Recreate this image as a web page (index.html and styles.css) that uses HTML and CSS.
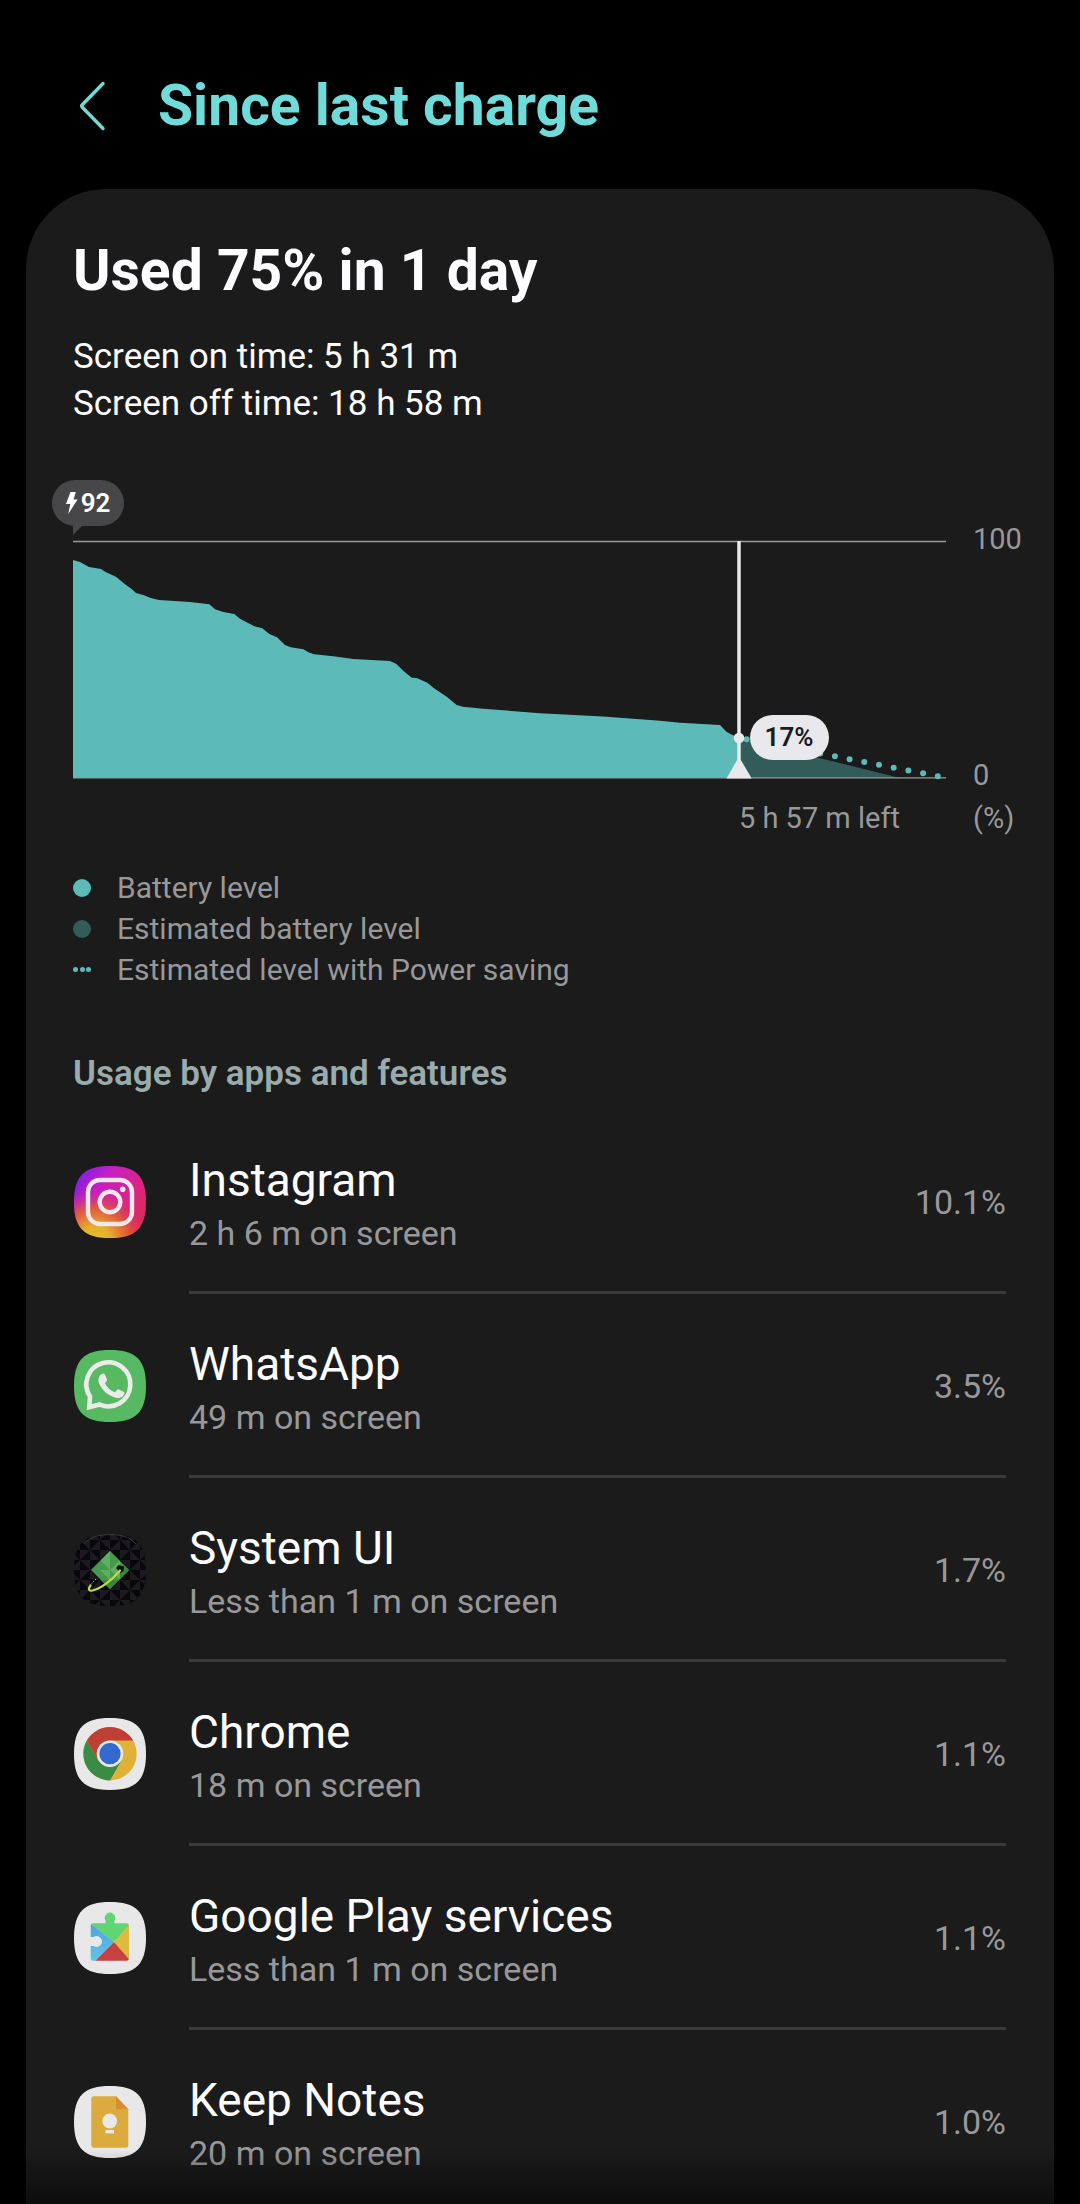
FILE: index.html
```html
<!DOCTYPE html>
<html lang="en">
<head>
<meta charset="utf-8">
<meta name="viewport" content="width=device-width, initial-scale=1">
<title>Since last charge</title>
<link rel="stylesheet" href="styles.css">
</head>
<body>
<header class="topbar">
  <button class="back" type="button" aria-label="Back">
    <svg width="28" height="50" viewBox="0 0 28 50"><path d="M25 2.500L4.500 23.500Q3 25 4.500 26.500L25 47.500" fill="none" stroke="currentColor" stroke-width="3.400" stroke-linecap="round" stroke-linejoin="round"/></svg>
  </button>
  <h1 class="title">Since last charge</h1>
</header>

<main class="card">
  <section class="summary">
    <h2 class="used">Used 75% in 1 day</h2>
    <p class="time">Screen on time: 5 h 31 m</p>
    <p class="time">Screen off time: 18 h 58 m</p>
  </section>

  <section class="chart">
    <div class="plot">
      <svg class="curve" viewBox="0 0 873 238" aria-hidden="true">
        <path d="M666 197L827 237H666Z" fill="#325c59"/>
        <path d="M0 19L7 21 16 26 28 28 32 30.700 43 35.700 52 43.300 58.700 48 63 52 71 54.300 77 56.700 86 59 117 61 136.300 63.300 142 68.300 150.300 71 161.300 73 167 77.700 181.300 85.300 189.300 87.300 196.300 93 204 96.300 212 104 217.700 106.300 230.300 108.300 235.300 111.300 241 113.300 260.300 115.300 280.300 118 317 120 323 122.700 330.300 129.700 338.700 136.700 343.700 137 354.300 141.700 361 147.300 373.700 155.700 383.700 164 389.700 165.700 410.300 167.700 467 172.300 530 175.500 587 179.700 607 181.700 647 184 653.700 191 660 194.300 666 196.700V237H0Z" fill="#5cbbb9"/>
        <path d="M0 .5H873M0 236.800H873" stroke="#98989a" stroke-width="1.300"/>
        <path d="M673.700 198.300L865 235.200" stroke="#5cbbb9" stroke-width="6" stroke-linecap="round" stroke-dasharray="0 14.970"/>
        <path d="M666 0V236" stroke="#e9e8ec" stroke-width="3.500"/>
        <path d="M653.500 237.500L663.500 220Q666 216 668.500 220L678.700 237.500Z" fill="#e9e8ec"/>
        <circle cx="666" cy="197" r="5.300" fill="#e9e8ec"/>
      </svg>
      <div class="start-tag">
        <svg width="12" height="22" viewBox="0 0 12 22" aria-hidden="true"><path d="M4.500 0H9.800L7.600 7.500H11.600L2.200 22 4.300 12H0Z" fill="#fff"/></svg>92
      </div>
      <div class="now-tag">17%</div>
    </div>
    <div class="axis"><span>100</span><span>0</span></div>
    <div class="left-time">5 h 57 m left</div>
    <div class="unit">(%)</div>
  </section>

  <ul class="legend">
    <li><span class="dot"></span>Battery level</li>
    <li><span class="dot dot-dim"></span>Estimated battery level</li>
    <li><span class="dots"><i></i><i></i><i></i></span>Estimated level with Power saving</li>
  </ul>

  <h3 class="section-title">Usage by apps and features</h3>

  <ul class="apps">
    <li class="app">
      <svg class="icon" viewBox="0 0 72 72" aria-hidden="true">
        <defs>
          <linearGradient id="igBase" x1="0" y1="0" x2="1" y2=".75"><stop offset="0" stop-color="#6a1cf5"/><stop offset=".35" stop-color="#c51fc4"/><stop offset=".7" stop-color="#dc2484"/><stop offset="1" stop-color="#d92b50"/></linearGradient>
          <radialGradient id="igWarm" cx=".3" cy="1.050" r=".72"><stop offset="0" stop-color="#e5c52e"/><stop offset=".3" stop-color="#e5b02e"/><stop offset=".65" stop-color="#e2622f" stop-opacity=".85"/><stop offset="1" stop-color="#dc2b70" stop-opacity="0"/></radialGradient>
        </defs>
        <path d="M36 0C62 0 72 10 72 36S62 72 36 72 0 62 0 36 10 0 36 0Z" fill="url(#igBase)"/>
        <path d="M36 0C62 0 72 10 72 36S62 72 36 72 0 62 0 36 10 0 36 0Z" fill="url(#igWarm)"/>
        <rect x="14" y="14" width="44" height="44" rx="12" fill="none" stroke="#f0e8ec" stroke-width="4.400"/>
        <circle cx="36" cy="36" r="10.300" fill="none" stroke="#f0e8ec" stroke-width="4.400"/>
        <circle cx="48.700" cy="23.300" r="2.800" fill="#f0e8ec"/>
      </svg>
      <div class="info"><span class="name">Instagram</span><span class="usage">2 h 6 m on screen</span></div>
      <span class="percent">10.1%</span>
    </li>
    <li class="app">
      <svg class="icon" viewBox="0 0 72 72" aria-hidden="true">
        <path d="M36 0C62 0 72 10 72 36S62 72 36 72 0 62 0 36 10 0 36 0Z" fill="#57b962"/>
        <path d="M16 46.500A22 22 0 1 1 25.500 54.500L15.300 57.200Z" fill="none" stroke="#ebebeb" stroke-width="4.600" stroke-linejoin="miter"/>
        <path d="M27.500 24C29 23.200 30.300 23.300 31 24.800L33 29.500C33.400 30.600 31.500 32.500 31 33.300 33 37.500 36.300 40.500 41 42.300 42.300 41.300 43.500 39 44.700 39.400L50 42C51.200 42.800 49.800 45.500 48.500 46.600 46.500 48.300 43.500 48.400 41 47.500 33.500 45 28.800 40.800 25.500 34.500 23.500 30.500 24.500 26 27.500 24Z" fill="#ebebeb"/>
      </svg>
      <div class="info"><span class="name">WhatsApp</span><span class="usage">49 m on screen</span></div>
      <span class="percent">3.5%</span>
    </li>
    <li class="app">
      <svg class="icon" viewBox="0 0 72 72" aria-hidden="true">
        <defs>
          <pattern id="facets" width="20" height="20" x="6" y="6" patternUnits="userSpaceOnUse"><path d="M0 0H10V10ZM20 0V10H10ZM0 20V10H10ZM10 10L20 20H10Z" fill="#1c1a20"/></pattern>
          <clipPath id="diamond"><path d="M36 17L55 36 36 55 17 36Z"/></clipPath>
        </defs>
        <path d="M36 0C62 0 72 10 72 36S62 72 36 72 0 62 0 36 10 0 36 0Z" fill="#08070b"/>
        <path d="M36 0C62 0 72 10 72 36S62 72 36 72 0 62 0 36 10 0 36 0Z" fill="url(#facets)"/>
        <path d="M10 10C17 2 25 .7 36 .7S55 2 62 10" fill="none" stroke="#3a3a3e" stroke-width="1"/>
        <g clip-path="url(#diamond)">
          <path d="M17 17H55V55H17Z" fill="#45994b"/>
          <path d="M26 17H36V36L26 26ZM36 36L46 26V46ZM26 36H36V46Z" fill="#60ae62"/>
          <path d="M26 46H55V55H26ZM46 36L55 26V46H46Z" fill="#388541"/>
        </g>
        <path d="M42 34L44.500 31 50 32.500 49.500 37 46.500 39Z" fill="#071008"/>
        <path d="M46 36.500C38 46 27 54.500 18.500 56.500 14.500 57.500 13.800 55 16.500 51.500" fill="none" stroke="#c1dd3c" stroke-width="2.200" stroke-linecap="round"/>
        <path d="M17 50.500L22 45" fill="none" stroke="#bccb76" stroke-width="1" stroke-dasharray="1.500 1.500"/>
      </svg>
      <div class="info"><span class="name">System UI</span><span class="usage">Less than 1 m on screen</span></div>
      <span class="percent">1.7%</span>
    </li>
    <li class="app">
      <svg class="icon" viewBox="0 0 72 72" aria-hidden="true">
        <path d="M36 0C62 0 72 10 72 36S62 72 36 72 0 62 0 36 10 0 36 0Z" fill="#e8e8e8"/>
        <circle cx="36" cy="35.700" r="26.700" fill="#e0b137"/>
        <path d="M12.900 22.400A26.700 26.700 0 0 0 36 62.400L47.500 42.400H24.500Z" fill="#3a8c45"/>
        <path d="M12.900 22.400A26.700 26.700 0 0 1 59.100 22.400H36L24.500 42.400Z" fill="#bf3f34"/>
        <circle cx="36" cy="35.700" r="13.300" fill="#e8e8e8"/>
        <circle cx="36" cy="35.700" r="10.600" fill="#3469cf"/>
      </svg>
      <div class="info"><span class="name">Chrome</span><span class="usage">18 m on screen</span></div>
      <span class="percent">1.1%</span>
    </li>
    <li class="app">
      <svg class="icon" viewBox="0 0 72 72" aria-hidden="true">
        <defs>
          <clipPath id="piece"><path d="M19 21.300H31.500V18.500A5.200 5.200 0 1 1 40.500 18.500V21.300H52.500Q55 21.300 55 24V56Q55 58.700 52.500 58.700H19Q16.700 58.700 16.700 56V44H19.500A5.400 5.400 0 1 0 19.500 35H16.700V24Q16.700 21.300 19 21.300Z"/></clipPath>
          <linearGradient id="sky" x1="0" y1="0" x2="0" y2="1"><stop offset="0" stop-color="#4da3dd"/><stop offset="1" stop-color="#62c6e8"/></linearGradient>
        </defs>
        <path d="M36 0C62 0 72 10 72 36S62 72 36 72 0 62 0 36 10 0 36 0Z" fill="#e8e8e8"/>
        <g clip-path="url(#piece)">
          <path d="M16 8H56V23L40 40 16 21Z" fill="#5fd672"/>
          <path d="M56 22V59L40 40Z" fill="#e0ba3c"/>
          <path d="M16 21L40 40 20 60H16Z" fill="url(#sky)"/>
          <path d="M40 40L57 59.500H20.500Z" fill="#c8403f"/>
        </g>
      </svg>
      <div class="info"><span class="name">Google Play services</span><span class="usage">Less than 1 m on screen</span></div>
      <span class="percent">1.1%</span>
    </li>
    <li class="app">
      <svg class="icon" viewBox="0 0 72 72" aria-hidden="true">
        <path d="M36 0C62 0 72 10 72 36S62 72 36 72 0 62 0 36 10 0 36 0Z" fill="#e8e8e8"/>
        <path d="M20 10.300H42L54.300 23.300V59Q54.300 61.700 51.600 61.700H20Q17.300 61.700 17.300 59V13Q17.300 10.300 20 10.300Z" fill="#dbac3d"/>
        <path d="M42 10.300L54.300 23.300H42Z" fill="#dc8c2e"/>
        <circle cx="35.700" cy="35" r="7.400" fill="#e8e8e8"/>
        <path d="M31.500 44H40V47.400H31.500Z" fill="#e8e8e8"/>
      </svg>
      <div class="info"><span class="name">Keep Notes</span><span class="usage">20 m on screen</span></div>
      <span class="percent">1.0%</span>
    </li>
  </ul>
</main>
<div class="fade"></div>
</body>
</html>
```
FILE: styles.css
```css
* { box-sizing: border-box; }

body {
  margin: 0;
  min-height: 100vh;
  display: flex;
  flex-direction: column;
  background: #000;
  color: #fdfcff;
  font-family: Roboto, "Liberation Sans", sans-serif;
}

h1, h2, h3, p, ul { margin: 0; padding: 0; }
ul { list-style: none; }

.topbar {
  display: flex;
  align-items: center;
  gap: 52px;
  padding: 74px 78px 51px;
  color: #70dcd9;
}

.back {
  display: flex;
  padding: 0;
  border: 0;
  background: none;
  color: inherit;
}

.title { font-size: 57px; line-height: 64px; font-weight: 700; }

.card {
  flex: 1;
  margin: 0 26px;
  padding: 46px 0 0;
  border-radius: 80px 80px 0 0;
  background: #1b1b1b;
}

.summary { padding: 0 47px; }
.used { margin-bottom: 26px; font-size: 57px; line-height: 72px; font-weight: 700; }
.time { font-size: 35px; line-height: 47px; }

.chart {
  display: grid;
  grid-template-columns: 1fr 47px;
  column-gap: 27px;
  margin-top: 114px;
  padding: 0 34px 0 47px;
  color: #98989a;
  font-size: 29px;
  line-height: 36px;
}

.plot { position: relative; }
.curve { display: block; width: 100%; overflow: visible; }

.start-tag {
  position: absolute;
  left: -21px;
  top: -61px;
  width: 72px;
  height: 46px;
  display: flex;
  align-items: center;
  justify-content: center;
  gap: 3px;
  border-radius: 23px;
  background: #47474a;
  color: #fff;
  font-size: 26px;
  font-weight: 600;
}

.start-tag::after {
  content: "";
  position: absolute;
  left: 21px;
  top: 46px;
  border-top: 9px solid #47474a;
  border-right: 9px solid transparent;
}

.now-tag {
  position: absolute;
  left: 77.500%;
  top: 73%;
  width: 79px;
  height: 45px;
  border-radius: 23px;
  background: #e9e8ec;
  color: #1b1b1b;
  font-size: 26px;
  line-height: 45px;
  font-weight: 600;
  text-align: center;
}

.axis {
  display: flex;
  flex-direction: column;
  justify-content: space-between;
  margin: -20px 0 -14px;
}

.left-time { margin: 21px 46px 0 0; text-align: right; }
.unit { margin-top: 21px; }

.legend {
  margin-top: 31px;
  padding: 0 47px;
  color: #98989a;
  font-size: 30px;
  line-height: 41px;
}

.legend li { display: flex; align-items: center; gap: 26px; }
.dot { width: 18px; height: 18px; border-radius: 50%; background: #5cbbb9; }
.dot-dim { background: #325c59; }
.dots { display: flex; justify-content: space-between; width: 18px; }
.dots i { width: 5px; height: 5px; border-radius: 50%; background: #5cbbb9; }

.section-title {
  margin-top: 60px;
  padding: 0 47px;
  color: #99abac;
  font-size: 35px;
  line-height: 48px;
  font-weight: 600;
}

.apps { margin-top: 12px; padding: 0 48px; }

.app {
  display: grid;
  grid-template-columns: 72px 1fr auto;
  column-gap: 43px;
  align-items: center;
}

.icon { display: block; width: 72px; height: 72px; margin-top: 2px; }

.info {
  grid-column: 2;
  display: flex;
  flex-direction: column;
  padding: 43px 0 32px;
}

.name { font-size: 46px; line-height: 54px; }
.usage { color: #98989a; font-size: 34px; line-height: 52px; }
.percent { margin-top: 2px; color: #98989a; font-size: 34px; line-height: 48px; }

.app:not(:last-child)::after {
  content: "";
  grid-column: 2 / 4;
  height: 3px;
  background: #3a3a3b;
}

.app:last-child { align-items: start; }
.app:last-child .info { padding-bottom: 24px; }
.app:last-child .icon { margin-top: 56px; }
.app:last-child .percent { margin-top: 68px; }

.fade {
  position: fixed;
  inset: auto 0 0;
  height: 54px;
  background: linear-gradient(rgba(0, 0, 0, 0), rgba(0, 0, 0, .5));
  pointer-events: none;
}
```
